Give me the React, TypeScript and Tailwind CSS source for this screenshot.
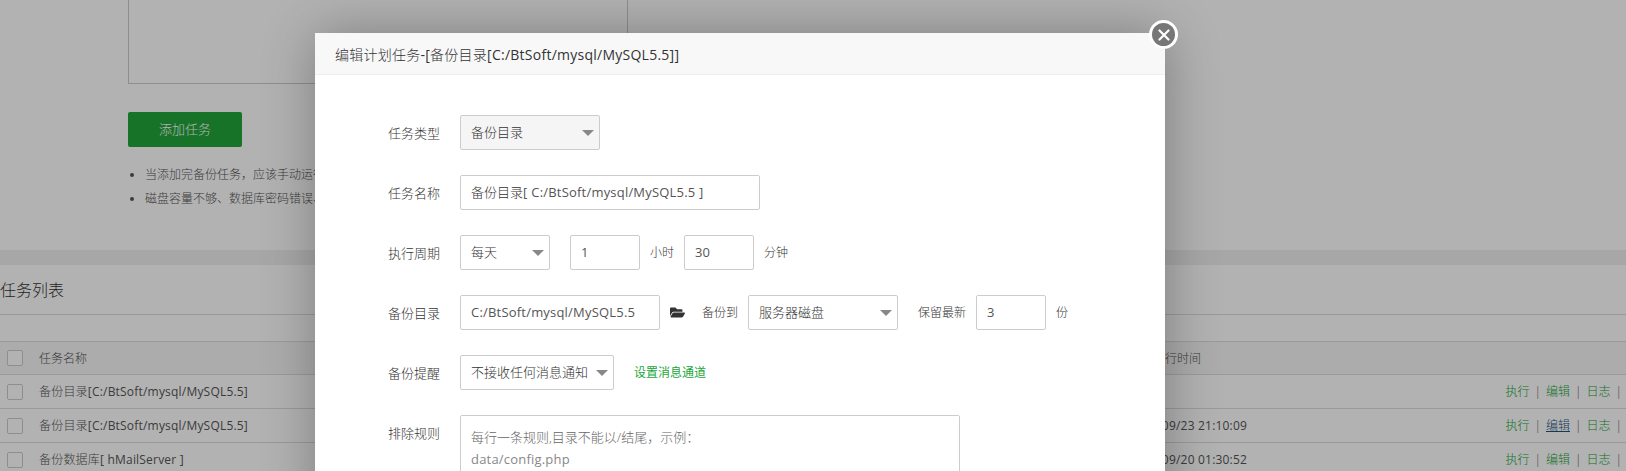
import { FaFolderOpen } from "react-icons/fa"

const font = "font-['Open_Sans','Noto_Sans_CJK_SC',sans-serif]"

const rows = [
  { type: "备份目录", name: "[C:/BtSoft/mysql/MySQL5.5]", time: "", hover: false },
  { type: "备份目录", name: "[C:/BtSoft/mysql/MySQL5.5]", time: "2020/09/23 21:10:09", hover: true },
  { type: "备份数据库", name: "[ hMailServer ]", time: "2020/09/20 01:30:52", hover: false },
]

function Check() {
  return <span className="h-4 w-4 shrink-0 rounded-[2px] border border-[#ccc] bg-white" />
}

function Arrow() {
  return <span className="h-0 w-0 border-x-[6px] border-t-[6px] border-x-transparent border-t-[#888]" />
}

function Field({ w, children, gray }: { w: string; children: React.ReactNode; gray?: boolean }) {
  return (
    <div className={`flex h-[35px] shrink-0 items-center rounded-[2px] border border-[#ccc] pl-[10px] text-[#555] ${w} ${gray ? "bg-[#f5f5f5]" : "bg-white"}`}>
      {children}
    </div>
  )
}

function Select({ w, arrowPad, text, gray }: { w: string; arrowPad: string; text: string; gray?: boolean }) {
  return (
    <Field w={w} gray={gray}>
      <span className="flex-1 whitespace-nowrap font-light text-[#333]">{text}</span>
      <span className={`flex ${arrowPad}`}>
        <Arrow />
      </span>
    </Field>
  )
}

function FormRow({ label, children }: { label: string; children: React.ReactNode }) {
  return (
    <div className="flex items-start">
      <div className="mr-5 h-[35px] w-[100px] text-right font-light leading-[36px] text-[#333]">{label}</div>
      <div className="flex items-center">{children}</div>
    </div>
  )
}

function Actions({ hover }: { hover: boolean }) {
  return (
    <div className="ml-auto flex items-center pr-[4px] pt-px font-light text-[#20a53a]">
      <span>执行</span>
      <span className="mx-[5px] text-[#555]">|</span>
      <span className={hover ? "text-[#23527c] underline" : ""}>编辑</span>
      <span className="mx-[5px] text-[#555]">|</span>
      <span>日志</span>
      <span className="ml-[5px] text-[#555]">|</span>
    </div>
  )
}

export default function App() {
  return (
    <div className={`relative h-[471px] w-[1626px] overflow-hidden bg-white text-[13px] ${font}`}>
      <div className="pl-[128px]">
        <div className="h-[84px] w-[500px] border border-t-0 border-[#ccc]" />
        <button className="mt-7 h-[35px] w-[114px] rounded-[2px] bg-[#20a53a] text-[13px] font-light text-white">添加任务</button>
        <ul className="mt-[16px] list-disc pl-[17px] text-[12px] font-light leading-[24px] text-[#555]">
          <li>当添加完备份任务，应该手动运行一次，并检查备份包是否完整</li>
          <li>磁盘容量不够、数据库密码错误、网络不好等原因，可能导致数据库备份不完整。</li>
        </ul>
      </div>

      <div className="mt-[39px] h-[15px] bg-[#f0f0f0]" />
      <div className="flex h-[50px] items-center border-b border-[#ddd] pt-px text-[16px] font-light text-[#333]">任务列表</div>
      <div className="h-[26px]" />

      <div className="text-[12px] text-[#555]">
        <div className="flex h-[34px] items-center border-y border-[#ddd] bg-[#f6f6f6] pl-[7px]">
          <Check />
          <span className="ml-[16px] w-[1090px] pt-px font-light">任务名称</span>
          <span className="pt-px font-light">上次执行时间</span>
        </div>
        {rows.map((row, i) => (
          <div key={i} className="flex h-[34px] items-center border-b border-[#ddd] pl-[7px]">
            <Check />
            <span className="ml-[16px] w-[1090px] pt-px tracking-[0.2px]">
              <span className="font-light">{row.type}</span>
              {row.name}
            </span>
            <span className="pt-px tracking-[0.2px]">{row.time}</span>
            <Actions hover={row.hover} />
          </div>
        ))}
      </div>

      {/* dim layer over the page */}
      <div className="absolute inset-0 bg-black/30" />

      <div className="absolute left-[315px] top-[33px] h-[480px] w-[850px] bg-white shadow-[1px_1px_50px_rgba(0,0,0,0.3)]">
        <div className="h-[42px] border-b border-[#eee] bg-[#f8f8f8] pl-5 text-[14px] leading-[43px] tracking-[0.25px] text-[#333]">
          <span className="font-light">编辑计划任务</span>-[<span className="font-light">备份目录</span>[C:/BtSoft/mysql/MySQL5.5]]
        </div>
        <div className="flex flex-col gap-[25px] pl-[25px] pt-[40px]">
          <FormRow label="任务类型">
            <Select w="w-[140px]" arrowPad="pr-[5px]" text="备份目录" gray />
          </FormRow>
          <FormRow label="任务名称">
            <Field w="w-[300px]">
              <span className="font-light text-[#333]">备份目录</span>[ <span className="ml-1 tracking-[0.2px]">C:/BtSoft/mysql/MySQL5.5 ]</span>
            </Field>
          </FormRow>
          <FormRow label="执行周期">
            <Select w="w-[90px]" arrowPad="pr-[5px]" text="每天" />
            <div className="ml-5">
              <Field w="w-[70px]">1</Field>
            </div>
            <span className="mx-[10px] text-[12px] font-light text-[#333]">小时</span>
            <Field w="w-[70px]">30</Field>
            <span className="ml-[10px] text-[12px] font-light text-[#333]">分钟</span>
          </FormRow>
          <FormRow label="备份目录">
            <Field w="w-[200px]">
              <span className="tracking-[0.2px]">C:/BtSoft/mysql/MySQL5.5</span>
            </Field>
            <FaFolderOpen className="ml-[10px] text-[15px] text-[#333]" />
            <span className="ml-[17px] text-[12px] font-light text-[#333]">备份到</span>
            <div className="ml-[10px]">
              <Select w="w-[150px]" arrowPad="pr-[5px]" text="服务器磁盘" />
            </div>
            <span className="ml-5 text-[12px] font-light text-[#333]">保留最新</span>
            <div className="ml-[10px]">
              <Field w="w-[70px]">3</Field>
            </div>
            <span className="ml-[10px] text-[12px] font-light text-[#333]">份</span>
          </FormRow>
          <FormRow label="备份提醒">
            <Select w="w-[154px]" arrowPad="pr-[5px]" text="不接收任何消息通知" />
            <span className="ml-5 text-[12px] text-[#20a53a]">设置消息通道</span>
          </FormRow>
          <FormRow label="排除规则">
            <div className="h-[100px] w-[500px] rounded-[2px] border border-[#ccc] px-[10px] pt-[10px] leading-[22px] text-[#888]">
              <div className="font-light text-[#666]">每行一条规则,目录不能以/结尾，示例：</div>
              <div className="tracking-[0.2px]">data/config.php</div>
            </div>
          </FormRow>
        </div>
      </div>

      <div className="absolute left-[1149px] top-[20px] flex h-[29px] w-[29px] items-center justify-center rounded-full border-[3px] border-white bg-[#777]">
        <svg width="12" height="12" viewBox="0 0 12 12" stroke="white" strokeWidth="2.2" strokeLinecap="round">
          <path d="M1.5 1.5l9 9M10.5 1.5l-9 9" />
        </svg>
      </div>
    </div>
  )
}
